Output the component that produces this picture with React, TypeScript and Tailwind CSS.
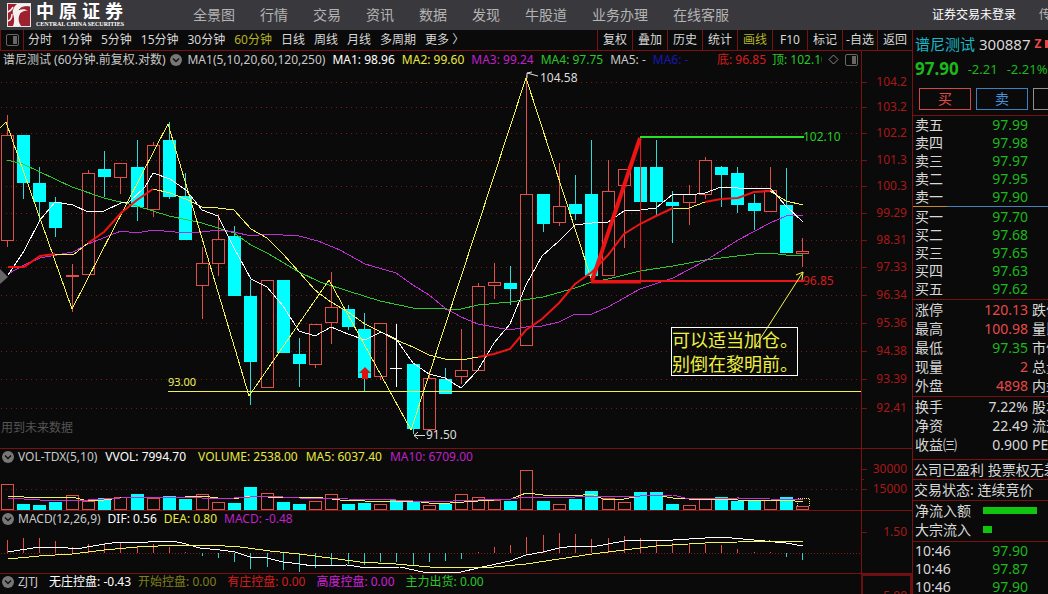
import React from 'react';

type Kind = 'up' | 'down' | 'flat';
type Candle = [Kind, number, number, number, number];

const navItems = ['全景图', '行情', '交易', '资讯', '数据', '发现', '牛股道', '业务办理', '在线客服'];
const periods = ['分时', '1分钟', '5分钟', '15分钟', '30分钟', '60分钟', '日线', '周线', '月线', '多周期', '更多 〉'];
const tools = ['复权', '叠加', '历史', '统计', '画线', 'F10', '标记', '-自选', '返回'];

// kind, high, body top, body bottom, low
const candles: Candle[] = [
  ['up', 115, 135, 240, 247],
  ['down', 135, 135, 183, 199],
  ['down', 167, 183, 202, 222],
  ['down', 197, 202, 228, 237],
  ['up', 264, 275, 276, 312],
  ['up', 170, 173, 274, 274],
  ['down', 151, 169, 177, 197],
  ['up', 163, 163, 177, 194],
  ['down', 140, 167, 207, 221],
  ['up', 142, 145, 209, 217],
  ['down', 122, 140, 197, 199],
  ['down', 173, 196, 240, 240],
  ['up', 247, 263, 285, 319],
  ['up', 214, 239, 263, 276],
  ['down', 226, 236, 296, 296],
  ['down', 280, 296, 362, 405],
  ['up', 280, 280, 387, 387],
  ['down', 280, 280, 353, 353],
  ['down', 338, 354, 364, 387],
  ['up', 324, 324, 364, 368],
  ['up', 272, 307, 322, 344],
  ['down', 305, 309, 327, 330],
  ['down', 313, 329, 378, 391],
  ['up', 323, 323, 376, 380],
  ['flat', 324, 368, 369, 387],
  ['down', 363, 364, 429, 434],
  ['up', 371, 378, 429, 429],
  ['down', 368, 379, 394, 394],
  ['up', 329, 370, 376, 384],
  ['up', 283, 286, 370, 370],
  ['up', 263, 282, 285, 299],
  ['down', 266, 283, 289, 305],
  ['up', 75, 194, 345, 345],
  ['down', 194, 194, 224, 232],
  ['up', 163, 206, 222, 226],
  ['down', 175, 204, 214, 220],
  ['down', 140, 194, 276, 276],
  ['up', 160, 191, 275, 275],
  ['up', 169, 169, 185, 248],
  ['down', 167, 167, 202, 202],
  ['down', 140, 167, 202, 215],
  ['down', 191, 202, 206, 243],
  ['up', 185, 194, 202, 225],
  ['up', 157, 160, 194, 199],
  ['down', 166, 167, 175, 207],
  ['down', 167, 173, 205, 213],
  ['down', 194, 203, 211, 230],
  ['up', 167, 190, 211, 211],
  ['down', 168, 205, 253, 253],
  ['up', 238, 251, 253, 267],
];

const volumeTops = [
  484, 504, 505, 502, 495, 501, 498, 497, 494, 498, 496, 499, 494, 502, 503, 487, 493,
  502, 504, 501, 494, 504, 503, 504, 500, 501, 505, 504, 494, 497, 500, 501, 470, 501,
  504, 499, 491, 498, 502, 492, 492, 504, 505, 498, 497, 501, 501, 500, 497, 506,
];

const macdEnds = [
  540, 538, 538, 541, 547, 544, 543, 542, 546, 544, 547, 552, 556, 558, 562, 569, 567,
  570, 572, 568, 565, 564, 565, 562, 562, 565, 562, 561, 559, 552, 547, 545, 537, 535,
  533, 534, 539, 538, 536, 538, 541, 543, 544, 544, 545, 549, 552, 552, 557, 560,
];

const priceAxis: [number, string][] = [
  [82, '104.2'],
  [107, '103.2'],
  [133, '102.2'],
  [160, '101.3'],
  [186, '100.3'],
  [213, '99.29'],
  [240, '98.31'],
  [267, '97.33'],
  [295, '96.34'],
  [323, '95.36'],
  [351, '94.38'],
  [379, '93.39'],
  [408, '92.41'],
];

const ma1 =
  '8,275 24,251 40,220 55,202 73,205 88,212 104,211 121,203 129,202 145,187 153,173 170,179 186,190 202,210 218,216 234,248 251,279 267,287 283,306 299,331 315,336 331,327 348,334 365,340 381,332 396,339 413,363 429,374 445,378 461,388 478,370 494,343 510,324 526,285 542,256 559,241 575,225 592,223 608,222 624,211 640,210 656,208 673,194 689,195 705,193 721,187 738,188 754,189 770,188 786,206 803,222';
const ma2 =
  '8,267 24,267 40,256 55,254 73,255 88,243 104,232 121,213 137,200 153,189 170,193 186,199 202,207 218,208 234,210 251,229 267,238 283,254 299,272 315,290 331,302 348,312 365,324 381,332 396,340 413,347 429,355 445,359 461,360 478,357 494,354 510,349 526,330 542,319 559,303 575,284 592,272 608,255 624,234 640,224 656,216 673,208 689,208 705,202 721,199 738,198 754,192 770,191 786,201 803,205';
const ma3 =
  '8,274 24,265 40,258 73,252 88,244 121,231 137,233 153,230 186,233 202,232 218,230 234,232 251,236 267,234 299,236 318,241 340,250 365,264 396,273 413,285 429,295 445,308 461,317 478,324 494,327 510,330 526,327 542,326 559,322 575,314 592,314 608,307 624,298 640,289 673,278 705,261 738,240 770,223 786,216 803,215';
const ma4 =
  '7,160 23,164 40,172 72,187 104,198 137,206 169,216 202,223 234,233 251,245 267,253 299,272 320,282 348,291 380,301 413,308 445,309 461,309 478,305 510,302 543,297 575,288 592,282 608,279 640,271 673,266 705,260 721,258 754,254 770,253 786,255 803,255';

// stretches of MA2 that are rising
const risingTrend = [
  '8,267 24,267 40,256 55,254',
  '88,243 104,232 121,213 137,200 153,189',
  '478,357 494,354 510,349 526,330 542,319 559,303 575,284 592,272 608,255 624,234 640,224 656,216 673,208',
  '705,202 721,199 738,198 754,192 770,191',
];

const asks = [
  ['卖五', '97.99'],
  ['卖四', '97.98'],
  ['卖三', '97.97'],
  ['卖二', '97.95'],
  ['卖一', '97.90'],
];

const bids = [
  ['买一', '97.70'],
  ['买二', '97.68'],
  ['买三', '97.65'],
  ['买四', '97.63'],
  ['买五', '97.62'],
];

const daily = [
  ['涨停', '120.13', '跌停', 'text-[#e84848]'],
  ['最高', '100.98', '量比', 'text-[#e84848]'],
  ['最低', '97.35', '市值', 'text-[#1cb81c]'],
  ['现量', '2', '总量', 'text-[#e84848]'],
  ['外盘', '4898', '内盘', 'text-[#e84848]'],
];

const fundamentals = [
  ['换手', '7.22%', '股本', 'text-[#d8d8d8]'],
  ['净资', '22.49', '流通', 'text-[#d8d8d8]'],
  ['收益㈢', '0.900', 'PE', 'text-[#d8d8d8]'],
];

const ticks = [
  ['10:46', '97.90'],
  ['10:46', '97.87'],
  ['10:46', '97.90'],
];

const barX = (i: number) => Math.floor(7.2 + i * 16.239);

const Logo: React.FC = () => (
  <a href="#" className="flex items-center gap-[5px] w-[186px] pl-[7px] text-white">
    <svg width="24" height="24" viewBox="0 0 24 24" className="shrink-0">
      <rect width="24" height="24" fill="#e8e4e4" />
      <rect x="1" y="1" width="22" height="22" fill="#9c2230" />
      <path d="M10 1h13v3c-5-1-9 0-11 3 3-1 7-1 9 1-5 0-8 2-9 5-1 4 0 7 2 10H6c2-5 1-9 0-12C5 8 7 3 10 1z" fill="#f4f0f0" />
      <path d="M1 9c2-1 4-2 5-5M1 18c3-1 4-4 4-7" stroke="#f4f0f0" strokeWidth="1.5" fill="none" />
      <path d="M12 7c2-3 6-4 11-3M13 11c2-2 5-3 8-3" stroke="#9c2230" strokeWidth="1" fill="none" />
    </svg>
    <span className="flex w-[87px] flex-col">
      <span className="flex justify-between text-[18px] leading-[18px] font-bold">
        <span>中</span>
        <span>原</span>
        <span>证</span>
        <span>券</span>
      </span>
      <span className="font-['Liberation_Serif',serif] text-[6px] leading-[8px] font-bold whitespace-nowrap">
        CENTRAL CHINA SECURITIES
      </span>
    </span>
  </a>
);

const PanelIcon: React.FC = () => (
  <svg width="13" height="12" viewBox="0 0 13 12" className="shrink-0">
    <rect x="0.5" y="0.5" width="12" height="11" rx="1.5" fill="none" stroke="#666" />
    <rect x="7" y="2" width="4" height="8" fill="#666" />
  </svg>
);

const CollapseButton: React.FC<{ label: string }> = ({ label }) => (
  <button type="button" aria-label={label} className="shrink-0">
    <svg width="12" height="12" viewBox="0 0 12 12" className="block">
      <circle cx="6" cy="6" r="6" fill="#777" />
      <path d="M3 4.5l3 3 3-3" fill="none" stroke="#111" strokeWidth="1.5" />
    </svg>
  </button>
);

const PriceChart: React.FC = () => (
  <svg viewBox="0 70 912 378" className="block w-full h-auto">
    <g shapeRendering="crispEdges">
      {priceAxis.map(([y]) => (
        <g key={y}>
          <path d={`M1 ${y + 0.5}H861`} stroke="#7c1a12" strokeDasharray="1 4" />
          <path d={`M861 ${y + 0.5}h6`} stroke="#7a1010" />
        </g>
      ))}
      <path d="M861.5 70V448" stroke="#7a1010" />

      {candles.map(([kind, high, top, bottom, low], i) => {
        const x = barX(i);
        if (kind === 'flat') {
          return <path key={i} d={`M${x + 0.5} ${high}V${low}M${x - 6} ${top + 0.5}h12`} stroke="#fff" />;
        }
        if (kind === 'down') {
          return (
            <g key={i}>
              <path d={`M${x + 0.5} ${high}V${low}`} stroke="#30d8d8" />
              <rect x={x - 6} y={top} width="13" height={bottom - top} fill="#00ffff" />
            </g>
          );
        }
        return (
          <g key={i} fill="none" stroke="#e05048">
            <path d={`M${x + 0.5} ${high}V${top}M${x + 0.5} ${bottom}V${low}`} />
            <rect x={x - 5.5} y={top + 0.5} width="12" height={Math.max(bottom - top, 1)} />
          </g>
        );
      })}

      <g fill="none">
        <polyline points={ma4} stroke="#30c830" />
        <polyline points={ma3} stroke="#c030d0" />
        <polyline points={ma2} stroke="#f8f458" />
        <polyline points={ma1} stroke="#fff" />
        <polyline points="0,128 6,122 72,309 168,124 249,396 329,280 411,430 526,78 591,278" stroke="#f4f450" />
        <path d="M168 391.5H861" stroke="#f0f050" />
      </g>
    </g>

    <g fill="none" stroke="#ec1414">
      {risingTrend.map((points) => (
        <polyline key={points} points={points} strokeWidth="2" />
      ))}
      <path d="M592 281L640 138" strokeWidth="4" />
      <path d="M591 282H641" strokeWidth="3" />
      <path d="M592 281H804" strokeWidth="2" />
      <path d="M640.5 138V281" strokeWidth="1" />
    </g>
    <path d="M640 137H804" stroke="#28e028" strokeWidth="2" />
    <path d="M0 269l8 8-8 7z" fill="#666" />
    <path d="M365 367l6 6h-3v6h-6v-6h-3z" fill="#e01010" />

    {/* high / low pointers */}
    <path d="M538 76l-11-3M527 78v-5l5-1M425 435.500h-11M418 432l-4 3.500 4 3.500" stroke="#ddd" fill="none" />
    <path d="M755 347L803 272M796 275l7-3-1 8" stroke="#f4f450" fill="none" />

    <g fontSize="12">
      <text x="540" y="82" fill="#ddd">104.58</text>
      <text x="426" y="439" fill="#ddd">91.50</text>
      <text x="803" y="141" fill="#28c828">102.10</text>
      <text x="803" y="285" fill="#d81c1c">96.85</text>
      <text x="1" y="432" fill="#555">用到未来数据</text>
      <text x="168" y="386" fontSize="11" fill="#f0f060">93.00</text>
      {priceAxis.map(([y, label]) => (
        <text key={label} x="907" y={y + 4} textAnchor="end" fill="#a81818">
          {label}
        </text>
      ))}
    </g>

    <rect x="671.5" y="327.5" width="126" height="48" fill="none" stroke="#fff" />
    <g fontSize="18" fill="#f0f040">
      <text x="672" y="347">可以适当加仓。</text>
      <text x="672" y="371">别倒在黎明前。</text>
    </g>
  </svg>
);

const VolumeChart: React.FC = () => (
  <svg viewBox="0 465 912 45" className="block w-full h-auto overflow-visible">
    <g shapeRendering="crispEdges" fill="none">
      <path d="M1 489.500H861" stroke="#7c1a12" strokeDasharray="1 4" />
      <path d="M861.5 449V510M861 469.500h6M861 479.500h3M861 489.500h6" stroke="#7a1010" />
      {volumeTops.map((top, i) =>
        candles[i][0] === 'up' ? (
          <rect key={i} x={barX(i) - 5.5} y={top + 0.5} width="12" height={509 - top} stroke="#e05048" />
        ) : (
          <rect key={i} x={barX(i) - 6} y={top} width="13" height={510 - top} fill="#00ffff" />
        )
      )}
      <path d="M797.5 506V498.500H809.500V506" stroke="#e8e860" strokeDasharray="1 1" />
      <polyline
        points="8,496 39,498 55,497 72,497 88,501 104,500 120,498 137,497 185,497 202,496 218,498 234,499 250,496 267,497 323,498 340,500 390,502 413,501 429,503 450,503 478,501 494,500 511,499 526,493 543,495 575,496 592,494 603,499 624,499 640,496 656,495 673,498 689,499 721,499 738,500 754,501 786,500 803,502"
        stroke="#f0f060"
      />
      <polyline
        points="8,498 40,500 88,500 137,497 170,497 202,498 234,498 267,496 299,498 348,499 396,500 429,502 478,500 511,499 526,497 559,498 592,496 640,496 673,495 689,499 738,498 770,499 803,500"
        stroke="#c830d0"
      />
    </g>
    <g fontSize="12" fill="#a81818" textAnchor="end">
      <text x="907" y="473">30000</text>
      <text x="907" y="493">15000</text>
    </g>
  </svg>
);

const MacdChart: React.FC = () => (
  <svg viewBox="0 527 912 46" className="block w-full h-auto overflow-visible">
    <g shapeRendering="crispEdges" fill="none">
      <path d="M1 553.500H861" stroke="#8c1a14" strokeDasharray="1 2" />
      <path d="M861.5 511V573M861 532.500h6" stroke="#7a1010" />
      {macdEnds.map((end, i) => (
        <path key={i} d={`M${barX(i) + 0.5} 553V${end}`} stroke={end < 553 ? '#e05048' : '#30d0d0'} />
      ))}
      <polyline
        points="8,552 39,547 60,547 76,549 99,545 118,542 137,543 160,541 172,541 182,543 200,548 220,550 235,552 250,557 267,558 283,562 300,564 313,566 347,565 367,568 400,567 423,572 461,572 478,568 510,561 526,555 543,552 559,548 575,546 592,547 624,541 640,540 673,540 721,537 754,540 786,543 803,546"
        stroke="#fff"
      />
      <polyline
        points="8,559 39,556 72,554 104,550 137,547 180,545 210,545 240,547 270,551 299,554 330,558 360,562 396,564 430,567 461,568 494,567 526,564 559,559 592,554 624,550 656,546 705,543 738,542 770,541 803,542"
        stroke="#f4f458"
      />
    </g>
    <text x="907" y="536" fontSize="12" fill="#a81818" textAnchor="end">1.50</text>
  </svg>
);

const QuoteTable: React.FC<{ rows: string[][] }> = ({ rows }) => (
  <table className="w-full table-fixed text-sm leading-[18px]">
    <tbody>
      {rows.map(([label, value], i) => (
        <tr key={i}>
          <th scope="row" className="w-[46px] p-0 pl-[2px] text-left font-normal">{label}</th>
          <td className="w-[69px] p-0 text-right text-[#1cb81c]">{value}</td>
          <td className="p-0"></td>
        </tr>
      ))}
    </tbody>
  </table>
);

const DetailTable: React.FC<{ rows: string[][] }> = ({ rows }) => (
  <table className="w-full table-fixed text-sm leading-[19px] whitespace-nowrap">
    <tbody>
      {rows.map(([label, value, next, color]) => (
        <tr key={label}>
          <th scope="row" className="w-[46px] p-0 pl-[2px] text-left font-normal">{label}</th>
          <td className={`w-[69px] p-0 text-right ${color}`}>{value}</td>
          <td className="p-0 pl-1">{next}</td>
        </tr>
      ))}
    </tbody>
  </table>
);

const Sidebar: React.FC = () => (
  <aside className="w-[136px] shrink-0 overflow-hidden border-l border-[#7a1010] text-[#d8d8d8]">
    <div className="border-b border-[#7a1010] pb-[5px] whitespace-nowrap">
      <div className="flex items-center gap-1 pl-[2px] pt-1 text-[15px] leading-5">
        <span className="text-[#18b8c8]">谱尼测试</span>
        <span>300887</span>
        <span className="text-xs font-bold text-[#e84848]">Z</span>
        <span className="h-2 w-2 shrink-0 bg-[#e84848]"></span>
      </div>
      <div className="flex items-center gap-[9px] pl-[2px] pt-1 text-[13px] leading-[22px] text-[#1cb81c]">
        <span className="text-[17px] font-bold">97.90</span>
        <span>-2.21</span>
        <span>-2.21%</span>
      </div>
      <div className="flex gap-[5px] pl-[6px] pt-2 text-sm leading-5">
        <button type="button" className="w-[52px] shrink-0 border border-[#d04848] text-[#e84848]">买</button>
        <button type="button" className="w-[52px] shrink-0 border border-[#4080c0] text-[#4890d8]">卖</button>
        <button type="button" aria-label="撤单" className="w-[52px] shrink-0 border border-[#909090]"></button>
      </div>
    </div>
    <QuoteTable rows={asks} />
    <div className="flex h-px">
      <div className="w-[34px] bg-[#c88830]"></div>
      <div className="flex-1 bg-[#4880b8]"></div>
    </div>
    <div className="border-b border-[#7a1010] py-px">
      <QuoteTable rows={bids} />
    </div>
    <div className="border-b border-[#7a1010] pb-px">
      <DetailTable rows={daily} />
    </div>
    <div className="border-b border-[#7a1010] pb-[5px]">
      <DetailTable rows={fundamentals} />
    </div>
    <p className="border-b border-[#7a1010] pl-px text-sm leading-[19px] whitespace-nowrap">公司已盈利 投票权无差异</p>
    <p className="border-b border-[#7a1010] pl-px text-sm leading-5 whitespace-nowrap">交易状态: 连续竞价</p>
    <div className="border-b border-[#7a1010] pb-[2px] pl-[2px] text-sm leading-[19px]">
      <div className="flex items-center">
        <span className="w-[68px]">净流入额</span>
        <span className="h-[7px] w-[54px] bg-[#10c410]"></span>
      </div>
      <div className="flex items-center">
        <span className="w-[68px]">大宗流入</span>
        <span className="h-[7px] w-[9px] bg-[#10c410]"></span>
      </div>
    </div>
    <QuoteTable rows={ticks} />
  </aside>
);

const App: React.FC = () => {
  return (
    <div className="flex h-screen flex-col overflow-hidden bg-[#0a0a0a] font-['Noto_Sans','Noto_Sans_CJK_SC',sans-serif] text-xs text-[#c8c8c8]">
      {/* Header */}
      <header className="flex h-[30px] shrink-0 items-center bg-[#39383d] whitespace-nowrap">
        <Logo />
        <nav className="flex flex-1 gap-[25px] pl-[7px] text-sm text-[#b4b4b4]">
          {navItems.map((item) => (
            <a key={item} href="#">{item}</a>
          ))}
        </nav>
        <div className="flex w-[116px] shrink-0 items-center gap-[23px]">
          <button type="button" className="shrink-0 text-white">证券交易未登录</button>
          <button type="button" className="shrink-0 text-[#b4b4b4]">传统</button>
        </div>
      </header>

      <div className="flex min-h-0 flex-1">
        <main className="min-w-0 flex-1">
          {/* Period toolbar */}
          <div className="flex h-[21px] border-b border-[#7a1010] text-[#d8d8d8] whitespace-nowrap">
            <button type="button" aria-label="侧栏" className="flex w-6 items-center justify-center border-x border-[#7a1010]">
              <PanelIcon />
            </button>
            <div className="flex flex-1 items-center gap-[9px] pl-1">
              {periods.map((p) => (
                <button key={p} type="button" className={p === '60分钟' ? 'text-[#b4b428]' : ''}>
                  {p}
                </button>
              ))}
            </div>
            <div className="flex">
              {tools.map((t) => (
                <button
                  key={t}
                  type="button"
                  className={`w-[35px] border-l border-[#7a1010] text-center ${t === '画线' ? 'text-[#b4b428]' : ''}`}
                >
                  {t}
                </button>
              ))}
            </div>
          </div>

          {/* Price panel */}
          <div className="flex h-[19px] whitespace-nowrap">
            <div className="flex min-w-0 flex-1 items-center gap-[7px] pb-[2px] pl-[3px]">
              <div className="flex items-center gap-[5px]">
                <span>谱尼测试 (60分钟.前复权.对数)</span>
                <CollapseButton label="主图指标" />
                <span>MA1(5,10,20,60,120,250)</span>
              </div>
              <span className="text-white">MA1: 98.96</span>
              <span className="text-[#e8e840]">MA2: 99.60</span>
              <span className="text-[#c020c8]">MA3: 99.24</span>
              <span className="text-[#28c828]">MA4: 97.75</span>
              <span>MA5: -</span>
              <span className="text-[#1818b0]">MA6: -</span>
              <div className="ml-auto flex items-center gap-[6px] pr-[3px]">
                <span className="text-[#d81c1c]">底: 96.85</span>
                <span className="w-[50px] overflow-hidden text-[#28c828]">顶: 102.10</span>
                <svg width="11" height="11" viewBox="0 0 11 11" className="shrink-0">
                  <path d="M5.500 1L10 5.500 5.500 10 1 5.500z" fill="none" stroke="#888" />
                </svg>
                <PanelIcon />
              </div>
            </div>
            <div className="w-[51px] border-l border-[#7a1010]"></div>
          </div>
          <PriceChart />

          {/* Volume panel */}
          <section className="border-t border-[#7a1010]">
            <div className="flex h-4 items-center gap-2 pl-[2px] whitespace-nowrap">
              <div className="flex items-center gap-1">
                <CollapseButton label="成交量指标" />
                <span>VOL-TDX(5,10)</span>
              </div>
              <span className="mr-1 text-white">VVOL: 7994.70</span>
              <span className="text-[#e8e840]">VOLUME: 2538.00</span>
              <span className="text-[#e8e840]">MA5: 6037.40</span>
              <span className="text-[#c020c8]">MA10: 6709.00</span>
            </div>
            <VolumeChart />
          </section>

          {/* MACD panel */}
          <section className="border-t border-[#7a1010]">
            <div className="flex h-4 items-center gap-[7px] pl-[2px] whitespace-nowrap">
              <div className="flex items-center gap-1">
                <CollapseButton label="MACD指标" />
                <span>MACD(12,26,9)</span>
              </div>
              <span className="text-white">DIF: 0.56</span>
              <span className="text-[#e8e840]">DEA: 0.80</span>
              <span className="text-[#c020c8]">MACD: -0.48</span>
            </div>
            <MacdChart />
          </section>

          {/* ZJTJ panel */}
          <section className="flex border-t border-[#7a1010] whitespace-nowrap">
            <div className="flex h-4 flex-1 items-center gap-[7px] pl-[2px]">
              <div className="mr-1 flex items-center gap-1">
                <CollapseButton label="ZJTJ指标" />
                <span>ZJTJ</span>
              </div>
              <span className="text-white">无庄控盘: -0.43</span>
              <span className="mr-1 text-[#80801c]">开始控盘: 0.00</span>
              <span className="mr-1 text-[#d81c1c]">有庄控盘: 0.00</span>
              <span className="mr-1 text-[#d020d8]">高度控盘: 0.00</span>
              <span className="text-[#28c828]">主力出货: 0.00</span>
            </div>
            <div className="h-10 w-[51px] border-2 border-[#6a1010] pr-[3px] pt-3 text-right text-[#a81818]">5.00</div>
          </section>
        </main>

        <Sidebar />
      </div>
    </div>
  );
};

export default App;
